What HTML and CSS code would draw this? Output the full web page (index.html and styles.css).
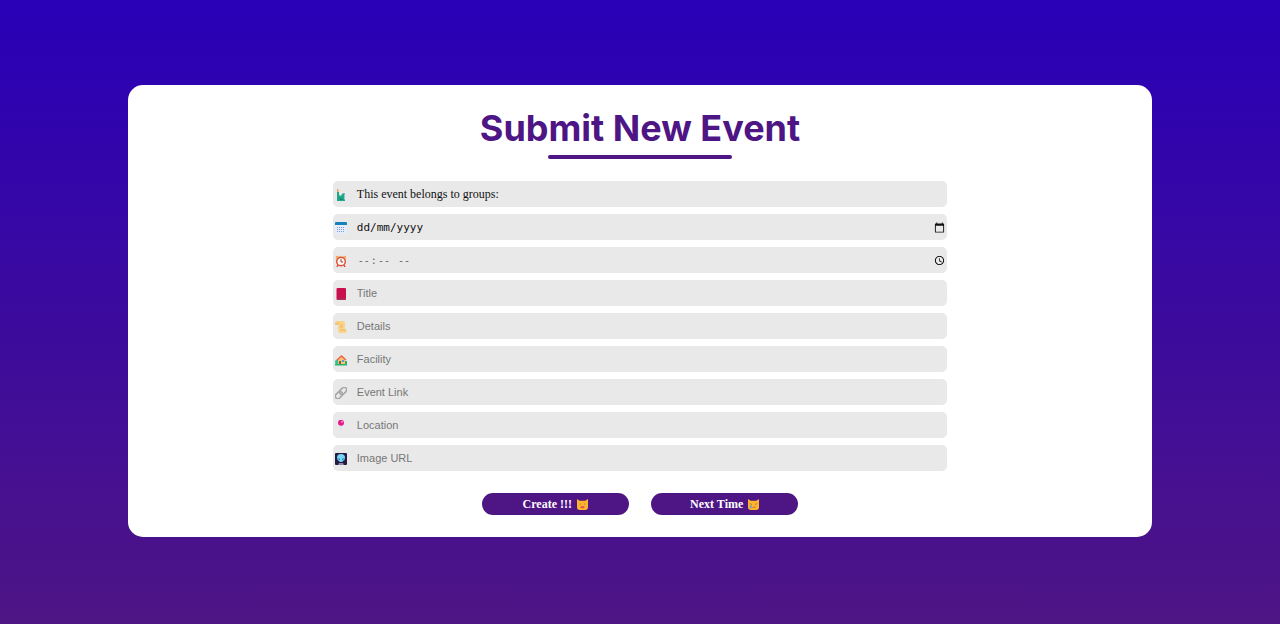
FILE: index.html
```html
<!DOCTYPE html>
<html lang="en-GB">
<head>
<meta charset="utf-8">
<title>Submit New Event</title>
<link rel="stylesheet" href="styles.css">
</head>
<body>
<main class="card">
  <h1 class="title">Submit New Event</h1>
  <form class="form">
    <div class="field">
      <svg class="icon" viewBox="0 0 12 12" aria-hidden="true"><path fill="#22a68b" d="M2 3h2v3l2 1 1-2 2-1 1 1-1 2 1 1-1 1 1 2v1H2z"/><path fill="#22a68b" d="M2 5h2v4H2z"/><path fill="#e7a65c" d="M2 0h1l1 2-1 1H2z"/><path fill="#178570" d="M4 9l4 1v1H5z"/></svg>
      <span class="control groups">This event belongs to groups:</span>
    </div>
    <div class="field">
      <svg class="icon" viewBox="0 0 12 12" aria-hidden="true"><rect x="0" y="1" width="12" height="11" rx="1" fill="#e6edf8"/><path fill="#1781bd" d="M1 0h10q1 0 1 1v2H0V1q0-1 1-1z"/><path fill="#7b9bd8" d="M2 5h1v1H2zM4 5h1v1H4zM6 5h1v1H6zM8 5h1v1H8zM2 7h1v1H2zM4 7h1v1H4zM6 7h1v1H6zM8 7h1v1H8zM2 9h1v1H2zM4 9h1v1H4zM6 9h1v1H6zM8 9h1v1H8z"/></svg>
      <input class="control mono" type="text" placeholder="dd/mm/yyyy" aria-label="Date">
      <button class="picker" type="button" aria-label="Choose date"><svg class="picker-icon" viewBox="0 0 24 24"><path fill="#111" d="M20 3h-1V1h-2v2H7V1H5v2H4c-1.100 0-2 .9-2 2v16c0 1.100.9 2 2 2h16c1.100 0 2-.9 2-2V5c0-1.100-.9-2-2-2zm0 18H4V8h16v13z"/></svg></button>
    </div>
    <div class="field">
      <svg class="icon" viewBox="0 0 12 12" aria-hidden="true"><path stroke="#df4b37" stroke-width="1.500" d="M3 10l-1 2M9 10l1 2"/><path fill="#f8a334" d="M1 4Q0 0 4 1zM11 4q1-4-3-3z"/><circle cx="6" cy="6.500" r="4.300" fill="#fff6eb" stroke="#df4b37" stroke-width="1.400"/><path fill="none" stroke="#874c45" d="M6 4v3h2"/></svg>
      <input class="control mono time" type="time" aria-label="Time">
    </div>
    <div class="field">
      <svg class="icon" viewBox="0 0 12 12" aria-hidden="true"><rect x="1.500" y="0" width="9.500" height="12" rx="1" fill="#c90f4e"/><path stroke="#93436a" d="M2 11h9"/></svg>
      <input class="control" type="text" placeholder="Title" aria-label="Title">
    </div>
    <div class="field">
      <svg class="icon" viewBox="0 0 12 12" aria-hidden="true"><path fill="#fbd488" d="M2 0h6q2 0 2 2v7h2q0 3-2 3H5q-2 0-2-2V4H1Q-1 0 2 0z"/><path fill="none" stroke="#e6b56c" d="M0 3h3V1M5 4h3M5 6h3M5 9h6"/></svg>
      <input class="control" type="text" placeholder="Details" aria-label="Details">
    </div>
    <div class="field">
      <svg class="icon" viewBox="0 0 12 12" aria-hidden="true"><circle cx="2.500" cy="8" r="2.500" fill="#2bc78a"/><path fill="#28b76a" d="M0 10h12v1.500H0zM10 7h2v4h-2z"/><path fill="#f8c276" d="M3 5l3.500-3L10 5v5H3z"/><path fill="none" stroke="#e96343" stroke-width="1.500" d="M2 6l4.500-4L11 6"/><path fill="#855a50" d="M4 7h2v3H4z"/><path fill="#619bd1" d="M7 6h2v2H7z"/></svg>
      <input class="control" type="text" placeholder="Facility" aria-label="Facility">
    </div>
    <div class="field">
      <svg class="icon" viewBox="0 0 12 12" aria-hidden="true"><g fill="none" stroke="#a5a5a8" stroke-width="1.600" transform="rotate(-45 6 6)"><rect x="-1" y="3.500" width="8" height="5" rx="2.500"/><rect x="5" y="3.500" width="8" height="5" rx="2.500"/></g></svg>
      <input class="control" type="text" placeholder="Event Link" aria-label="Event Link">
    </div>
    <div class="field">
      <svg class="icon" viewBox="0 0 12 12" aria-hidden="true"><path stroke="#dedee2" d="M6 6v5"/><circle cx="6" cy="2.800" r="3" fill="#e6168b"/><circle cx="7" cy="1.800" r="1" fill="#ff9ccd"/></svg>
      <input class="control" type="text" placeholder="Location" aria-label="Location">
    </div>
    <div class="field">
      <svg class="icon" viewBox="0 0 12 12" aria-hidden="true"><rect width="12" height="12" rx="1" fill="#261c43"/><path fill="#75d7f5" d="M6 1q4 0 4 3.500Q10 7 8 8L7 9H5L4 8Q2 7 2 4.500 2 1 6 1z"/><path fill="#2378a5" d="M3 5l2 1v1q-2 0-2-2zM9 5L7 6v1q2 0 2-2z"/><path fill="#8c879c" d="M4 10h4l1 2H3z"/></svg>
      <input class="control" type="text" placeholder="Image URL" aria-label="Image URL">
    </div>
    <div class="actions">
      <button class="action" type="submit">Create !!! <svg class="cat" viewBox="0 0 12 12" aria-hidden="true"><path fill="#fdb42f" d="M0 0l3 2h6l3-2v9q0 3-3 3H3q-3 0-3-3z"/><path fill="#ad6430" d="M3 5h1v1H3zM8 5h1v1H8z"/><path fill="#e64b60" d="M4 8h4v1L7 10H5L4 9z"/></svg></button>
      <button class="action" type="button">Next Time <svg class="cat" viewBox="0 0 12 12" aria-hidden="true"><path fill="#fdb42f" d="M0 0l3 2h6l3-2v9q0 3-3 3H3q-3 0-3-3z"/><path fill="none" stroke="#ad6430" d="M2 5l2 1M10 5L8 6M5 10q1-2 3-1"/><path fill="#62a9ba" d="M2 7h2v3H2z"/></svg></button>
    </div>
  </form>
</main>
</body>
</html>
```
FILE: styles.css
```css
* { box-sizing: border-box; }

body {
  margin: 0;
  min-height: 100vh;
  display: flex;
  align-items: center;
  justify-content: center;
  background: linear-gradient(#2900b7, #4e1585);
  font-family: "Liberation Serif", serif;
}

.card {
  width: 80%;
  margin-bottom: 2px;
  padding: 20px 0 22px;
  display: flex;
  flex-direction: column;
  align-items: center;
  background: #fff;
  border-radius: 15px;
}

.title {
  margin: 0 0 22px;
  display: flex;
  flex-direction: column;
  align-items: center;
  gap: 4px;
  font: 700 36px/46px Inter, sans-serif;
  color: #4e1585;
}

.title::after {
  content: "";
  width: 184px;
  height: 4px;
  border-radius: 2px;
  background: #4e1585;
}

.form {
  width: 60%;
  display: flex;
  flex-direction: column;
  gap: 7px;
}

.field {
  height: 26px;
  padding: 0 2px;
  display: flex;
  align-items: center;
  background: #e9e9e9;
  border-radius: 5px;
}

.icon {
  width: 12px;
  height: 12px;
  margin: 2px 10px 0 0;
  flex: none;
}

.control {
  flex: 1;
  min-width: 0;
  padding: 0;
  border: 0;
  background: transparent;
  color: #111;
  font: 11px "Liberation Sans", sans-serif;
}

.control::placeholder { color: #777; }

.groups { font: 12px "Liberation Serif", serif; }

.mono { font: 11px "DejaVu Sans Mono", monospace; }

.mono::placeholder { color: #111; }

.time {
  font-size: 10px;
  color: #666;
}

.time::-webkit-calendar-picker-indicator {
  width: 11px;
  height: 11px;
  padding: 0;
}

.picker {
  padding: 0;
  border: 0;
  display: flex;
  background: transparent;
}

.picker-icon {
  width: 11px;
  height: 11px;
}

.actions {
  margin-top: 15px;
  display: flex;
  justify-content: center;
  gap: 22px;
}

.action {
  width: 24%;
  height: 22px;
  padding: 0;
  display: flex;
  align-items: center;
  justify-content: center;
  gap: 5px;
  border: 0;
  border-radius: 11px;
  background: #4e1585;
  color: #fff;
  font: bold 12px "Liberation Serif", serif;
}

.cat {
  width: 11px;
  height: 11px;
}
```
